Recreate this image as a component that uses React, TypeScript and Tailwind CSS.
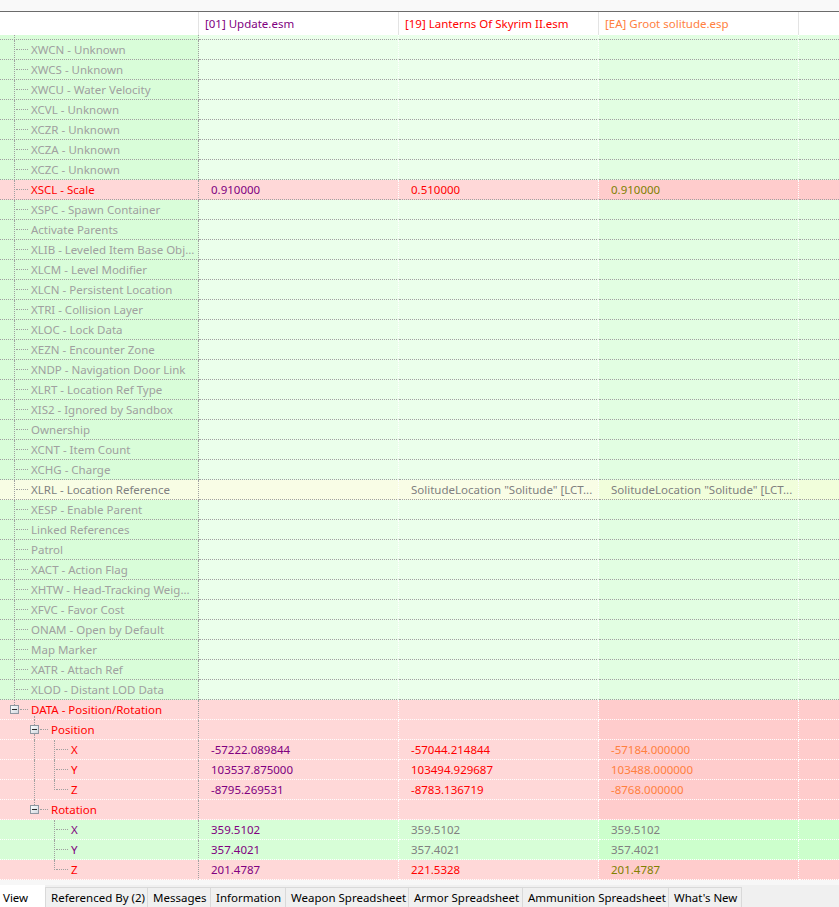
import React from "react";

type Kind = "g" | "p" | "y" | "gg";
type Seg =
  | { t: "v"; x: number; y1: number; y2: number }
  | { t: "h"; x1: number; x2: number }
  | { t: "b"; x: number };

type Row = {
  label: string;
  lc: string;
  kind: Kind;
  level: number;
  segs: Seg[];
  vals: [string, string, string];
  vc: [string, string, string];
  white?: boolean;
};

const GRAY = "#a0a0a0";
const RED = "#ff0000";
const PURPLE = "#800080";
const MID = "#808080";
const OLIVE = "#808000";
const ORANGE = "#ff8040";

const leaf0: Seg[] = [
  { t: "v", x: 14, y1: 0, y2: 20 },
  { t: "h", x1: 16, x2: 28 },
];

const plain = (label: string, lc = GRAY): Row => ({
  label,
  lc,
  kind: "g",
  level: 0,
  segs: leaf0,
  vals: ["", "", ""],
  vc: [PURPLE, RED, ORANGE],
});

const rows: Row[] = [
  plain("XWCN - Unknown"),
  plain("XWCS - Unknown"),
  plain("XWCU - Water Velocity"),
  plain("XCVL - Unknown"),
  plain("XCZR - Unknown"),
  plain("XCZA - Unknown"),
  plain("XCZC - Unknown"),
  {
    label: "XSCL - Scale",
    lc: RED,
    kind: "p",
    level: 0,
    segs: leaf0,
    vals: ["0.910000", "0.510000", "0.910000"],
    vc: [PURPLE, RED, OLIVE],
  },
  plain("XSPC - Spawn Container"),
  plain("Activate Parents"),
  plain("XLIB - Leveled Item Base Obj..."),
  plain("XLCM - Level Modifier"),
  plain("XLCN - Persistent Location"),
  plain("XTRI - Collision Layer"),
  plain("XLOC - Lock Data"),
  plain("XEZN - Encounter Zone"),
  plain("XNDP - Navigation Door Link"),
  plain("XLRT - Location Ref Type"),
  plain("XIS2 - Ignored by Sandbox"),
  plain("Ownership"),
  plain("XCNT - Item Count"),
  plain("XCHG - Charge"),
  {
    label: "XLRL - Location Reference",
    lc: MID,
    kind: "y",
    level: 0,
    segs: leaf0,
    vals: ["", 'SolitudeLocation "Solitude" [LCT...', 'SolitudeLocation "Solitude" [LCT...'],
    vc: [PURPLE, MID, MID],
  },
  plain("XESP - Enable Parent"),
  plain("Linked References"),
  plain("Patrol"),
  plain("XACT - Action Flag"),
  plain("XHTW - Head-Tracking Weig..."),
  plain("XFVC - Favor Cost"),
  plain("ONAM - Open by Default"),
  plain("Map Marker"),
  plain("XATR - Attach Ref"),
  plain("XLOD - Distant LOD Data"),
  {
    label: "DATA - Position/Rotation",
    lc: RED,
    kind: "p",
    level: 0,
    segs: [
      { t: "v", x: 14, y1: 0, y2: 5 },
      { t: "b", x: 14 },
      { t: "h", x1: 20, x2: 28 },
      { t: "v", x: 34, y1: 16, y2: 20 },
    ],
    vals: ["", "", ""],
    vc: [PURPLE, RED, ORANGE],
    white: true,
  },
  {
    label: "Position",
    lc: RED,
    kind: "p",
    level: 1,
    segs: [
      { t: "v", x: 34, y1: 0, y2: 5 },
      { t: "b", x: 34 },
      { t: "v", x: 34, y1: 14, y2: 20 },
      { t: "h", x1: 40, x2: 48 },
    ],
    vals: ["", "", ""],
    vc: [PURPLE, RED, ORANGE],
    white: true,
  },
  {
    label: "X",
    lc: RED,
    kind: "p",
    level: 2,
    segs: [
      { t: "v", x: 34, y1: 0, y2: 20 },
      { t: "v", x: 54, y1: 0, y2: 20 },
      { t: "h", x1: 56, x2: 68 },
    ],
    vals: ["-57222.089844", "-57044.214844", "-57184.000000"],
    vc: [PURPLE, RED, ORANGE],
    white: true,
  },
  {
    label: "Y",
    lc: RED,
    kind: "p",
    level: 2,
    segs: [
      { t: "v", x: 34, y1: 0, y2: 20 },
      { t: "v", x: 54, y1: 0, y2: 20 },
      { t: "h", x1: 56, x2: 68 },
    ],
    vals: ["103537.875000", "103494.929687", "103488.000000"],
    vc: [PURPLE, RED, ORANGE],
    white: true,
  },
  {
    label: "Z",
    lc: RED,
    kind: "p",
    level: 2,
    segs: [
      { t: "v", x: 34, y1: 0, y2: 20 },
      { t: "v", x: 54, y1: 0, y2: 10 },
      { t: "h", x1: 56, x2: 68 },
    ],
    vals: ["-8795.269531", "-8783.136719", "-8768.000000"],
    vc: [PURPLE, RED, ORANGE],
    white: true,
  },
  {
    label: "Rotation",
    lc: RED,
    kind: "p",
    level: 1,
    segs: [
      { t: "v", x: 34, y1: 0, y2: 5 },
      { t: "b", x: 34 },
      { t: "h", x1: 40, x2: 48 },
    ],
    vals: ["", "", ""],
    vc: [PURPLE, RED, ORANGE],
    white: true,
  },
  {
    label: "X",
    lc: PURPLE,
    kind: "gg",
    level: 2,
    segs: [
      { t: "v", x: 54, y1: 0, y2: 20 },
      { t: "h", x1: 56, x2: 68 },
    ],
    vals: ["359.5102", "359.5102", "359.5102"],
    vc: [PURPLE, MID, MID],
    white: true,
  },
  {
    label: "Y",
    lc: PURPLE,
    kind: "gg",
    level: 2,
    segs: [
      { t: "v", x: 54, y1: 0, y2: 20 },
      { t: "h", x1: 56, x2: 68 },
    ],
    vals: ["357.4021", "357.4021", "357.4021"],
    vc: [PURPLE, MID, MID],
    white: true,
  },
  {
    label: "Z",
    lc: RED,
    kind: "p",
    level: 2,
    segs: [
      { t: "v", x: 54, y1: 0, y2: 10 },
      { t: "h", x1: 56, x2: 68 },
    ],
    vals: ["201.4787", "221.5328", "201.4787"],
    vc: [PURPLE, RED, OLIVE],
    white: true,
  },
];

const bg: Record<Kind, [string, string, string]> = {
  g: ["bg-[#d9fdd9]", "bg-[#ebffeb]", "bg-[#e2fee2]"],
  p: ["bg-[#ffd8d8]", "bg-[#ffd8d8]", "bg-[#ffcccc]"],
  y: ["bg-[#f8fde4]", "bg-[#f9fde6]", "bg-[#f1fedb]"],
  gg: ["bg-[#d7fdd7]", "bg-[#d7fed7]", "bg-[#ccffcc]"],
};

function Box() {
  return (
    <svg width="9" height="9" viewBox="0 0 9 9" className="block">
      <defs>
        <linearGradient id="bx" x1="0" y1="0" x2="1" y2="1">
          <stop offset="0" stopColor="#ffffff" />
          <stop offset="1" stopColor="#cfd6de" />
        </linearGradient>
      </defs>
      <rect x="0.5" y="0.5" width="8" height="8" fill="url(#bx)" stroke="#8e96a0" />
      <path d="M2 4.5h5" stroke="#2a2a2a" strokeWidth="1" />
    </svg>
  );
}

function Guides({ segs }: { segs: Seg[] }) {
  return (
    <>
      {segs.map((s, i) => {
        if (s.t === "v")
          return (
            <span
              key={i}
              className="absolute w-0 border-l border-dotted border-[#a0a0a0]"
              style={{ left: s.x, top: s.y1, height: s.y2 - s.y1 }}
            />
          );
        if (s.t === "h")
          return (
            <span
              key={i}
              className="absolute h-0 top-[9px] border-t border-dotted border-[#a0a0a0]"
              style={{ left: s.x1, width: s.x2 - s.x1 }}
            />
          );
        return (
          <span key={i} className="absolute top-[5px]" style={{ left: s.x - 4 }}>
            <Box />
          </span>
        );
      })}
    </>
  );
}

function TreeRow({ r }: { r: Row }) {
  const b = bg[r.kind];
  const line = r.white ? "border-b-white" : "border-b-[#a0a0a0]";
  return (
    <div className="flex h-[20px] shrink-0">
      <div
        className={`relative w-[199px] shrink-0 border-b border-r border-dotted border-r-[#a0a0a0] ${line} ${b[0]}`}
      >
        <Guides segs={r.segs} />
        <div
          className="absolute top-0 h-[19px] flex items-center whitespace-nowrap"
          style={{ left: 31 + r.level * 20, color: r.lc }}
        >
          {r.label}
        </div>
      </div>
      {[0, 1, 2].map((c) => (
        <div
          key={c}
          className={`w-[200px] shrink-0 flex items-center pl-[12px] whitespace-nowrap overflow-hidden border-b border-r border-dotted border-r-white ${line} ${c === 2 ? b[2] : b[1]}`}
          style={{ color: r.vc[c] }}
        >
          {r.vals[c]}
        </div>
      ))}
      <div className={`flex-1 border-b border-dotted ${line} ${b[2]}`} />
    </div>
  );
}

const tabs: [string, number][] = [
  ["Referenced By (2)", 102],
  ["Messages", 63],
  ["Information", 75],
  ["Weapon Spreadsheet", 123],
  ["Armor Spreadsheet", 114],
  ["Ammunition Spreadsheet", 146],
  ["What's New", 73],
];

export default function App() {
  return (
    <div className="w-[839px] h-[907px] flex flex-col overflow-hidden bg-[#f0f0f0] text-[11.5px] leading-none font-['Noto_Sans',sans-serif] text-black">
      <div className="h-[11px] shrink-0 bg-[#f9f9f9]" />
      <div className="h-px shrink-0 bg-[#6b6b6b]" />
      {/* header */}
      <div className="h-[23px] shrink-0 flex bg-white">
        <div className="w-[199px] shrink-0 border-r border-[#e3e3e3]" />
        <div className="w-[200px] shrink-0 border-r border-[#e3e3e3] flex items-center pl-[6px] text-[#800080] whitespace-nowrap">
          [01] Update.esm
        </div>
        <div className="w-[200px] shrink-0 border-r border-[#e3e3e3] flex items-center pl-[6px] text-[#ff0000] whitespace-nowrap">
          [19] Lanterns Of Skyrim II.esm
        </div>
        <div className="w-[200px] shrink-0 border-r border-[#e3e3e3] flex items-center pl-[6px] text-[#ff8040] whitespace-nowrap">
          [EA] Groot solitude.esp
        </div>
        <div className="flex-1" />
      </div>
      {/* partial row */}
      <div className="flex h-[5px] shrink-0">
        <div className="relative w-[199px] shrink-0 border-b border-r border-dotted border-r-[#a0a0a0] border-b-[#a0a0a0] bg-[#d9fdd9]">
          <span className="absolute left-[14px] top-0 h-[5px] w-0 border-l border-dotted border-[#a0a0a0]" />
        </div>
        <div className="w-[200px] shrink-0 border-b border-r border-dotted border-r-white border-b-[#a0a0a0] bg-[#ebffeb]" />
        <div className="w-[200px] shrink-0 border-b border-r border-dotted border-r-white border-b-[#a0a0a0] bg-[#ebffeb]" />
        <div className="w-[200px] shrink-0 border-b border-r border-dotted border-r-white border-b-[#a0a0a0] bg-[#e2fee2]" />
        <div className="flex-1 border-b border-dotted border-b-[#a0a0a0] bg-[#e2fee2]" />
      </div>
      {rows.map((r, i) => (
        <TreeRow key={i} r={r} />
      ))}
      {/* bottom tabs */}
      <div className="h-[5px] shrink-0 bg-[#f7f7f7]" />
      <div className="flex-1 flex items-end">
        <div className="w-[45px] h-[23px] shrink-0 bg-white flex items-center pl-[3px] pt-[3px]">View</div>
        {tabs.map(([t, w]) => (
          <div
            key={t}
            className="h-[21px] shrink-0 flex items-center pl-[5px] whitespace-nowrap overflow-hidden border-l border-t border-[#d9d9d9] bg-[#f0f0f0]"
            style={{ width: w }}
          >
            {t}
          </div>
        ))}
        <div className="h-[21px] w-px bg-[#d9d9d9]" />
      </div>
    </div>
  );
}
